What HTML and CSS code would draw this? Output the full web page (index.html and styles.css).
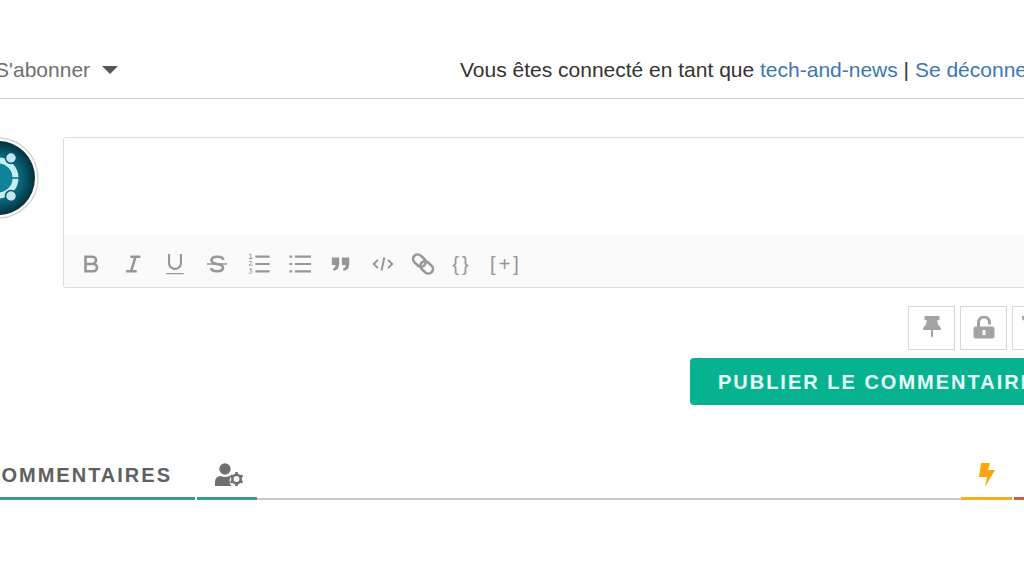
FILE: index.html
```
<!DOCTYPE html>
<html lang="fr">
<head>
<meta charset="utf-8">
<title>Commentaires</title>
<link rel="stylesheet" href="styles.css">
</head>
<body>
<main class="comments">
  <header class="bar">
    <button class="subscribe" type="button">S'abonner <svg width="16" height="8" viewBox="0 0 16 8"><path d="M0 0h16L8 8z" fill="currentColor"/></svg></button>
    <p class="session">Vous êtes connecté en tant que <a href="#profile">tech-and-news</a> | <a href="#logout">Se déconnecter</a></p>
  </header>

  <form class="compose">
    <svg class="avatar" viewBox="0 0 82 82" role="img" aria-label="tech-and-news">
      <defs><radialGradient id="disc"><stop offset="0" stop-color="#148aa3"/><stop offset=".6" stop-color="#08687c"/><stop offset="1" stop-color="#05303b"/></radialGradient></defs>
      <circle cx="41" cy="41" r="40" fill="#fff" stroke="#d4d6d8" stroke-width="1.5"/>
      <circle cx="41" cy="41" r="37" fill="url(#disc)"/>
      <circle cx="41" cy="41" r="17.500" fill="none" stroke="#c5edf2" stroke-width="6"/>
      <g stroke="#086a7e" stroke-width="1.500"><path d="M41 41h22M41 41 30 22M41 41 30 60"/></g>
      <circle cx="41" cy="41" r="14" fill="#108299"/>
      <g fill="#c5e6f0" stroke="#07596c" stroke-width="1.500"><circle cx="54" cy="21" r="5.500"/><circle cx="54" cy="59" r="5.500"/><circle cx="17" cy="41" r="5.500"/></g>
    </svg>
    <div class="fields">
      <div class="editor">
        <textarea class="text" aria-label="Commentaire"></textarea>
        <div class="tools">
          <button class="tool" type="button" aria-label="Gras"><svg width="24" height="24" viewBox="0 0 24 24"><path d="M6 4h7.500a3.900 3.900 0 0 1 0 7.900H6zM6 11.900h8.500a4 4 0 0 1 0 8.100H6z"/></svg></button>
          <button class="tool" type="button" aria-label="Italique"><svg width="24" height="24" viewBox="0 0 24 24"><path d="M9 4h11M4.500 20H16M14.800 4l-5 16"/></svg></button>
          <button class="tool" type="button" aria-label="Souligné"><svg width="24" height="24" viewBox="0 0 24 24"><path d="M5.500 1v10a6.500 6.500 0 0 0 13 0V1" stroke-width="2.300"/><path d="M2.500 22.500h19" stroke-width="1.500"/></svg></button>
          <button class="tool" type="button" aria-label="Barré"><svg width="24" height="24" viewBox="0 0 24 24"><path d="M19 7.500C18 3 6 3 6 8c0 3 3 3.500 6 4s6.500 1 6.500 4c0 5-12 5-13 .5"/><path d="M1 12h22" stroke-width="1.500"/></svg></button>
          <button class="tool tool-s" type="button" aria-label="Liste ordonnée"><svg width="24" height="24" viewBox="0 0 24 24"><path d="M8 4h15.500M8 12h15.500M8 20h15.500" stroke-width="2.400"/><path d="M1 2 3 1v5M1 6h4M1 9.500c3-1.500 4 .5 2 2l-2 1.800h4M1 17.500h3.500l-2 2c3 0 2.500 3.500-1.500 2.500" stroke-width="1"/></svg></button>
          <button class="tool tool-s" type="button" aria-label="Liste à puces"><svg width="24" height="24" viewBox="0 0 24 24"><path d="M6.500 4h17.500M6.500 12h17.500M6.500 20h17.500M.5 4h3M.5 12h3M.5 20h3" stroke-width="2.400"/></svg></button>
          <button class="tool tool-s" type="button" aria-label="Citation"><svg width="24" height="24" viewBox="0 0 24 24"><path d="M2 5h8v7c0 4-2 7-6 7.500l-1-2.300c2-.7 3-2 3-4.200H2zM13 5h8v7c0 4-2 7-6 7.500l-1-2.300c2-.7 3-2 3-4.200h-4z" fill="currentColor" stroke="none"/></svg></button>
          <button class="tool tool-s" type="button" aria-label="Code"><svg width="24" height="24" viewBox="0 0 24 24"><path d="M7.500 7.500 3 12l4.500 4.500M18.500 7.500 23 12l-4.500 4.500M14.500 5l-3 14" stroke-width="2.200"/></svg></button>
          <button class="tool tool-s" type="button" aria-label="Lien"><svg width="24" height="24" viewBox="0 0 24 24"><g transform="rotate(43 12 12)"><rect x="-1" y="7" width="15" height="10" rx="5"/><rect x="10" y="7" width="15" height="10" rx="5"/></g></svg></button>
          <button class="tool tool-braces" type="button" aria-label="Code source">{}</button>
          <button class="tool tool-spoiler" type="button" aria-label="Spoiler">[+]</button>
          <button class="tool tool-media" type="button" aria-label="Image"><svg width="24" height="24" viewBox="0 0 24 24"><rect x="3" y="3" width="19" height="18"/><path d="m4 18 6-6 4 4 3-3 5 5"/></svg></button>
        </div>
      </div>
      <div class="options">
        <button class="option" type="button" aria-label="Épingler"><svg width="24" height="24" viewBox="0 0 24 24"><path d="M4.500 0h15v4h-2.200l.7 5c2 .9 3 2.500 3 5H3c0-2.500 1-4.100 3-5l.7-5H4.500z"/><path d="M11 13h2v7l-1 2-1-2z"/></svg></button>
        <button class="option" type="button" aria-label="Fermer la discussion"><svg width="24" height="24" viewBox="0 0 24 24"><path d="M6.500 12V6.500a5.500 5.500 0 0 1 11 0v2" fill="none" stroke="currentColor" stroke-width="3"/><path fill-rule="evenodd" d="M3.500 10.500h17a2 2 0 0 1 2 2v8a2 2 0 0 1-2 2h-17a2 2 0 0 1-2-2v-8a2 2 0 0 1 2-2zM10.500 14v5h3v-5z"/></svg></button>
        <button class="option" type="button" aria-label="Notifications"><svg width="28" height="24" viewBox="0 0 28 24"><path d="M0 0h28v3l-11 9v9h-6v-9L0 3z"/></svg></button>
      </div>
      <button class="publish" type="button">PUBLIER LE COMMENTAIRE</button>
    </div>
  </form>

  <nav class="tabs">
    <a class="tab tab-title" href="#comments">COMMENTAIRES</a>
    <a class="tab tab-user" href="#authors" aria-label="Auteurs"><svg width="28" height="24" viewBox="0 0 28 24"><circle cx="10" cy="6" r="5.700"/><path d="M0 23v-4c0-4 3-6 6-6 2 1.200 6 1.200 8 0l2 .5c-2 3-2 6.500.5 9.500z"/><circle cx="21.500" cy="16" r="4.200" fill="none" stroke="currentColor" stroke-width="2.600"/><path d="M21.500 9v3M21.500 20v3M15.500 12.500l2.500 1.500M25 18l2.500 1.500M27.500 12.500 25 14M18 18l-2.500 1.500" stroke="currentColor" stroke-width="2.600"/></svg></a>
    <span class="fill"></span>
    <a class="tab tab-bolt" href="#reactions" aria-label="Plus réagi"><svg width="18" height="24" viewBox="0 0 18 24"><path d="M3 0h9l-2 7h7L7 24l2-10H1z"/></svg></a>
    <a class="tab tab-hot" href="#hot" aria-label="Populaires"><svg width="18" height="24" viewBox="0 0 18 24"><path d="M9 0c0 6 8 8 8 16a8 8 0 0 1-16 0c0-4 2-6 3-9l3 4z"/></svg></a>
  </nav>
</main>
</body>
</html>
```
FILE: styles.css
```
* { box-sizing: border-box; }
body {
  margin: 0;
  overflow: hidden;
  background: #fff;
  color: #333;
  font: 20px/24px "Liberation Sans", Arial, sans-serif;
}
button { padding: 0; border: 0; background: none; color: inherit; font: inherit; }
a { color: #3b78b3; text-decoration: none; }
p { margin: 0; }
svg { display: block; flex: none; }

.comments { margin: 0 -43px; padding-top: 58px; }

.bar {
  display: flex;
  justify-content: space-between;
  padding: 0 5px 16px 38px;
  border-bottom: 1px solid #cfcfcf;
}
.subscribe { display: flex; align-items: center; gap: 12px; color: #707070; font-size: 21px; }
.subscribe svg { color: #555; }
.session { font-size: 21px; white-space: nowrap; }

.compose { display: flex; gap: 24px; padding-top: 38px; }
.avatar { width: 82px; height: 82px; }
.fields { flex: 1; display: flex; flex-direction: column; align-items: flex-end; }
.editor {
  width: 100%;
  border: 1px solid #dcdcdc;
  border-radius: 3px;
  overflow: hidden;
}
.text {
  display: block;
  width: 100%;
  height: 97px;
  padding: 12px;
  border: 0;
  resize: none;
  outline: 0;
  background: #fff;
  font: inherit;
}
.tools { display: flex; align-items: center; height: 52px; padding: 6px 9px 0 6px; background: #fafafa; color: #969696; }
.tool { display: flex; justify-content: center; width: 42px; }
.tool svg { width: 22px; height: 22px; overflow: visible; fill: none; stroke: currentColor; stroke-width: 2.8; }
.tool-s { width: 41px; }
.tool-braces { width: 38px; letter-spacing: 3px; }
.tool-spoiler { width: 50px; letter-spacing: 3px; }
.tool-media { margin-left: auto; }

.options { display: flex; gap: 5px; padding: 18px 8px 8px 0; }
.option {
  display: flex;
  align-items: center;
  justify-content: center;
  width: 47px;
  height: 44px;
  border: 1px solid #d6d6d6;
  color: #a3a3a3;
}
.option svg { height: 24px; fill: currentColor; }
.publish {
  padding: 12px 31px 11px 28px;
  border-radius: 4px;
  background: #07b290;
  color: #e9fffa;
  font-weight: bold;
  letter-spacing: 2px;
  white-space: nowrap;
}

.tabs { display: flex; align-items: flex-end; padding-top: 58px; }
.tab {
  display: flex;
  justify-content: center;
  height: 37px;
  border-bottom: 3px solid #35a18b;
  color: #707070;
}
.tab svg { fill: currentColor; }
.tab-title { width: 238px; justify-content: flex-end; padding-right: 23px; color: #606060; font-weight: bold; letter-spacing: 2px; }
.tab-user { width: 60px; margin-left: 2px; padding-left: 4px; }
.fill { flex: 1; height: 2px; background: #c9c9c9; }
.tab-bolt { width: 51px; border-color: #f3b022; color: #fba50b; }
.tab-hot { width: 53px; margin-left: 2px; border-color: #cf5d43; color: #cf5d43; }
```
